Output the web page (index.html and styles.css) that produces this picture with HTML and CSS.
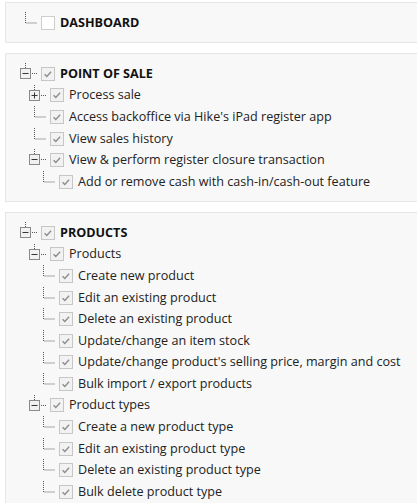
FILE: index.html
```html
<!DOCTYPE html>
<html lang="en">
<head>
<meta charset="utf-8">
<title>Permissions</title>
<link rel="stylesheet" href="styles.css">
</head>
<body>
<svg width="0" height="0" class="defs" aria-hidden="true">
  <defs>
    <g id="leaf"><path d="M5.5 0 V11 H17" fill="none" stroke="#555" stroke-width="1" stroke-dasharray="1 1"/></g>
    <g id="minus">
      <path d="M5.5 0 V5" fill="none" stroke="#555" stroke-dasharray="1 1"/>
      <rect x="0.5" y="5.5" width="10" height="10" fill="#f1f1f1" stroke="#8a8a8a"/>
      <path d="M2.5 10.5 H8.5" stroke="#333"/>
      <path d="M12 10.5 H17" fill="none" stroke="#555" stroke-dasharray="1 1"/>
    </g>
    <g id="plus">
      <path d="M5.5 0 V5" fill="none" stroke="#555" stroke-dasharray="1 1"/>
      <rect x="0.5" y="5.5" width="10" height="10" fill="#f1f1f1" stroke="#8a8a8a"/>
      <path d="M2.5 10.5 H8.5 M5.5 7.5 V13.5" stroke="#333"/>
      <path d="M12 10.5 H17" fill="none" stroke="#555" stroke-dasharray="1 1"/>
    </g>
    <g id="tick"><path d="M3 7.2 L5.6 9.8 L10.6 4.4" fill="none" stroke="#8c8c8c" stroke-width="1.6"/></g>
  </defs>
</svg>

<div class="panel">
  <ul class="tree">
    <li class="row l0"><svg class="branch" viewBox="0 0 17 21.6"><use href="#leaf"/></svg><span class="cb"></span><span class="label head">DASHBOARD</span></li>
  </ul>
</div>

<div class="panel">
  <ul class="tree">
    <li class="row l0"><svg class="branch" viewBox="0 0 17 21.6"><use href="#minus"/></svg><span class="cb on"><svg viewBox="0 0 14 14"><use href="#tick"/></svg></span><span class="label head">POINT OF SALE</span></li>
    <li class="row l1"><svg class="branch" viewBox="0 0 17 21.6"><use href="#plus"/></svg><span class="cb on"><svg viewBox="0 0 14 14"><use href="#tick"/></svg></span><span class="label">Process sale</span></li>
    <li class="row l1"><svg class="branch" viewBox="0 0 17 21.6"><use href="#leaf"/></svg><span class="cb on"><svg viewBox="0 0 14 14"><use href="#tick"/></svg></span><span class="label">Access backoffice via Hike's iPad register app</span></li>
    <li class="row l1"><svg class="branch" viewBox="0 0 17 21.6"><use href="#leaf"/></svg><span class="cb on"><svg viewBox="0 0 14 14"><use href="#tick"/></svg></span><span class="label">View sales history</span></li>
    <li class="row l1"><svg class="branch" viewBox="0 0 17 21.6"><use href="#minus"/></svg><span class="cb on"><svg viewBox="0 0 14 14"><use href="#tick"/></svg></span><span class="label">View &amp; perform register closure transaction</span></li>
    <li class="row l2"><svg class="branch" viewBox="0 0 17 21.6"><use href="#leaf"/></svg><span class="cb on"><svg viewBox="0 0 14 14"><use href="#tick"/></svg></span><span class="label">Add or remove cash with cash-in/cash-out feature</span></li>
  </ul>
</div>

<div class="panel">
  <ul class="tree">
    <li class="row l0"><svg class="branch" viewBox="0 0 17 21.6"><use href="#minus"/></svg><span class="cb on"><svg viewBox="0 0 14 14"><use href="#tick"/></svg></span><span class="label head">PRODUCTS</span></li>
    <li class="row l1"><svg class="branch" viewBox="0 0 17 21.6"><use href="#minus"/></svg><span class="cb on"><svg viewBox="0 0 14 14"><use href="#tick"/></svg></span><span class="label">Products</span></li>
    <li class="row l2"><svg class="branch" viewBox="0 0 17 21.6"><use href="#leaf"/></svg><span class="cb on"><svg viewBox="0 0 14 14"><use href="#tick"/></svg></span><span class="label">Create new product</span></li>
    <li class="row l2"><svg class="branch" viewBox="0 0 17 21.6"><use href="#leaf"/></svg><span class="cb on"><svg viewBox="0 0 14 14"><use href="#tick"/></svg></span><span class="label">Edit an existing product</span></li>
    <li class="row l2"><svg class="branch" viewBox="0 0 17 21.6"><use href="#leaf"/></svg><span class="cb on"><svg viewBox="0 0 14 14"><use href="#tick"/></svg></span><span class="label">Delete an existing product</span></li>
    <li class="row l2"><svg class="branch" viewBox="0 0 17 21.6"><use href="#leaf"/></svg><span class="cb on"><svg viewBox="0 0 14 14"><use href="#tick"/></svg></span><span class="label">Update/change an item stock</span></li>
    <li class="row l2"><svg class="branch" viewBox="0 0 17 21.6"><use href="#leaf"/></svg><span class="cb on"><svg viewBox="0 0 14 14"><use href="#tick"/></svg></span><span class="label">Update/change product's selling price, margin and cost</span></li>
    <li class="row l2"><svg class="branch" viewBox="0 0 17 21.6"><use href="#leaf"/></svg><span class="cb on"><svg viewBox="0 0 14 14"><use href="#tick"/></svg></span><span class="label">Bulk import / export products</span></li>
    <li class="row l1"><svg class="branch" viewBox="0 0 17 21.6"><use href="#minus"/></svg><span class="cb on"><svg viewBox="0 0 14 14"><use href="#tick"/></svg></span><span class="label">Product types</span></li>
    <li class="row l2"><svg class="branch" viewBox="0 0 17 21.6"><use href="#leaf"/></svg><span class="cb on"><svg viewBox="0 0 14 14"><use href="#tick"/></svg></span><span class="label">Create a new product type</span></li>
    <li class="row l2"><svg class="branch" viewBox="0 0 17 21.6"><use href="#leaf"/></svg><span class="cb on"><svg viewBox="0 0 14 14"><use href="#tick"/></svg></span><span class="label">Edit an existing product type</span></li>
    <li class="row l2"><svg class="branch" viewBox="0 0 17 21.6"><use href="#leaf"/></svg><span class="cb on"><svg viewBox="0 0 14 14"><use href="#tick"/></svg></span><span class="label">Delete an existing product type</span></li>
    <li class="row l2"><svg class="branch" viewBox="0 0 17 21.6"><use href="#leaf"/></svg><span class="cb on"><svg viewBox="0 0 14 14"><use href="#tick"/></svg></span><span class="label">Bulk delete product type</span></li>
    <li class="row l1"><svg class="branch" viewBox="0 0 17 21.6"><use href="#minus"/></svg><span class="cb on"><svg viewBox="0 0 14 14"><use href="#tick"/></svg></span></li>
  </ul>
</div>
</body>
</html>
```

FILE: styles.css
```css
html {
  overflow: hidden;
  background: #fff;
}
body {
  margin: 2px 0 0 5px;
  font-family: "Open Sans", "Liberation Sans", sans-serif;
  font-size: 12.6px;
  color: #222;
  overflow: hidden;
}
.defs {
  display: block;
  width: 0;
  height: 0;
}
.panel {
  width: calc(100% + 20px);
  box-sizing: border-box;
  background: #f8f8f8;
  border: 1px solid #e6e6e6;
  padding: 9px 0 8.4px;
  margin-bottom: 10px;
}
.tree {
  list-style: none;
  margin: 0;
  padding: 0;
}
.row {
  display: flex;
  align-items: center;
  height: 21.6px;
  white-space: nowrap;
}
.l0 { padding-left: 14px; }
.l1 { padding-left: 23px; }
.l2 { padding-left: 32px; }
.branch {
  width: 17px;
  height: 21.6px;
  flex: none;
  overflow: visible;
}
.cb {
  width: 14px;
  height: 14px;
  box-sizing: border-box;
  border: 1px solid #cdcdcd;
  background: #fff;
  margin-left: 4px;
  flex: none;
  display: flex;
}
.cb.on {
  background: #f2f2f2;
  border-color: #c6c6c6;
}
.cb svg {
  width: 12px;
  height: 12px;
}
.label {
  margin-left: 5px;
  line-height: 18px;
}
.head {
  font-weight: 700;
  color: #111;
}
```
